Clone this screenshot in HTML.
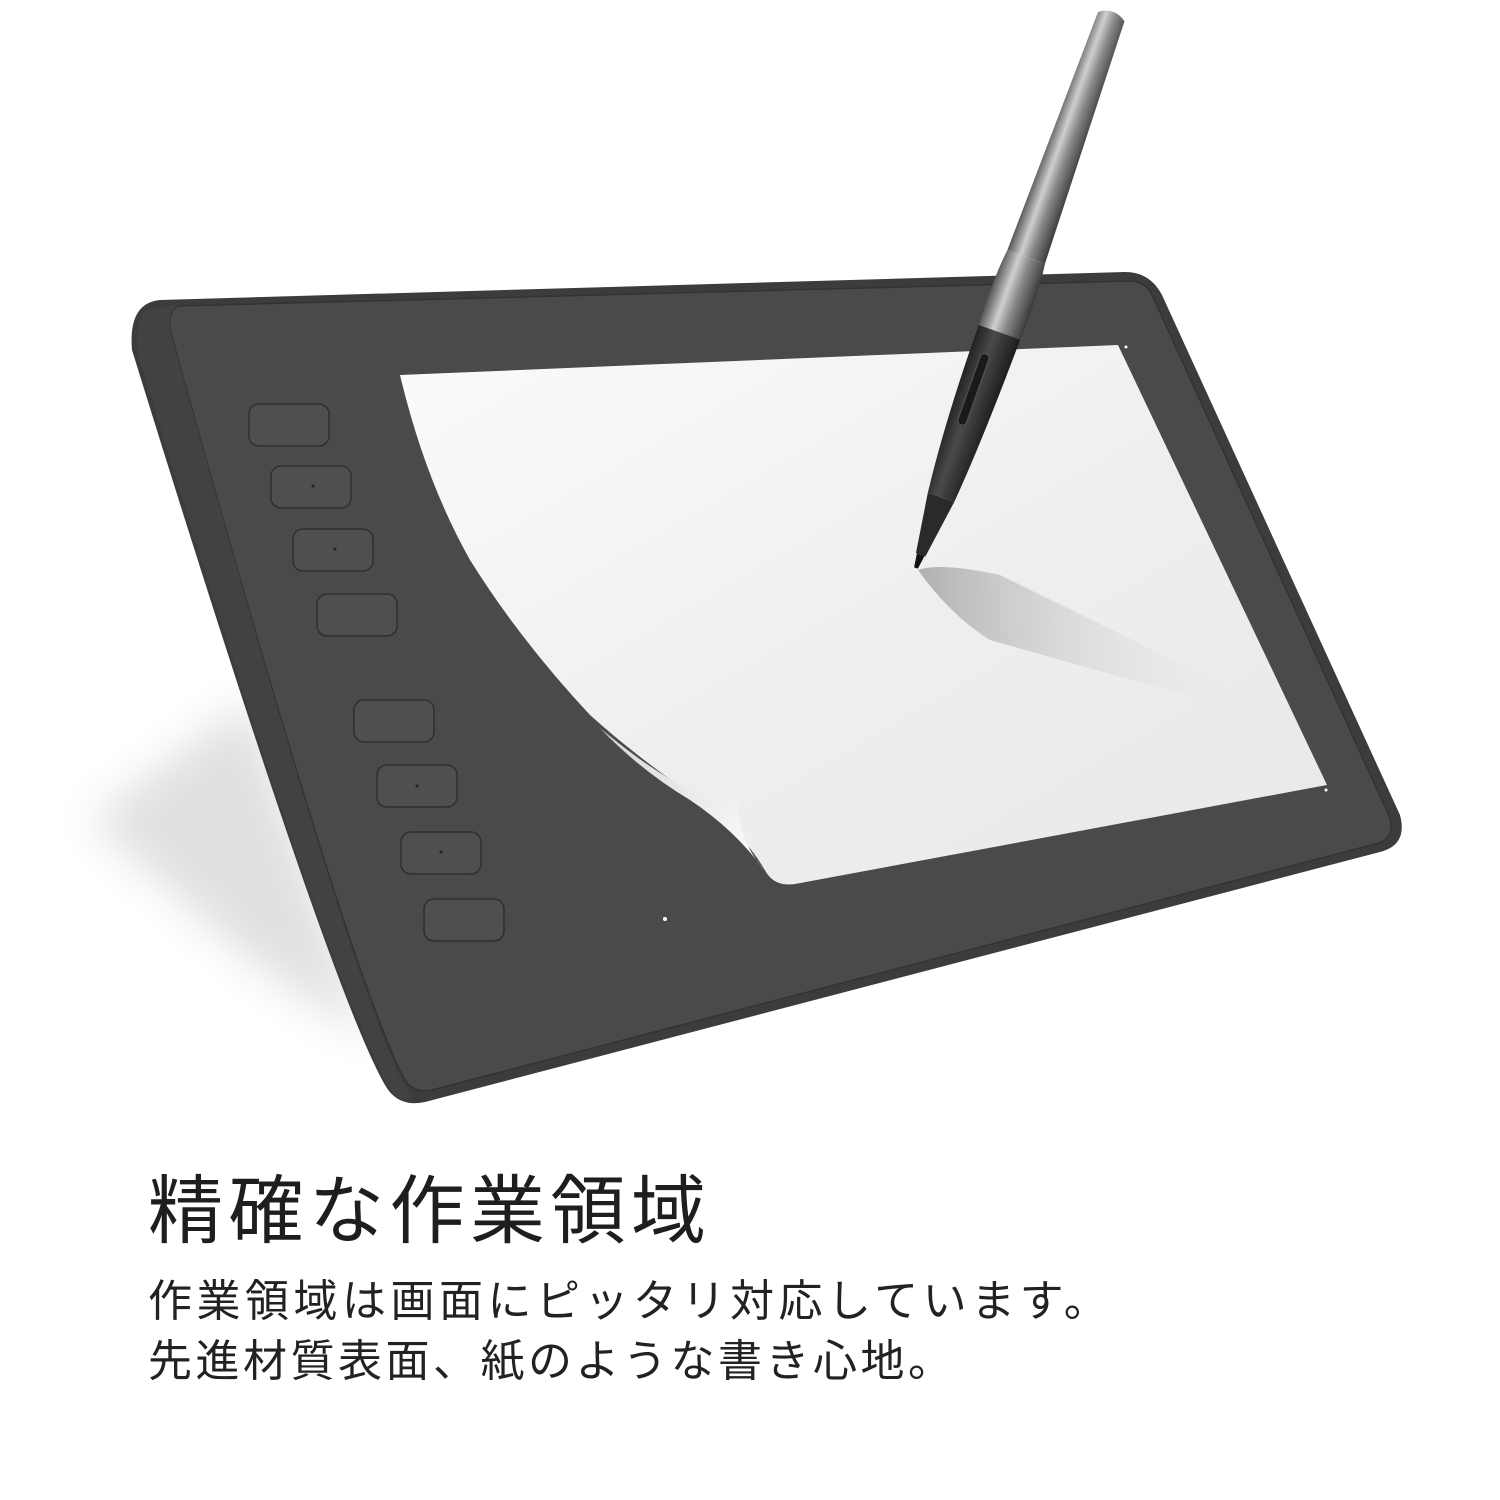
<!DOCTYPE html>
<html><head><meta charset="utf-8"><style>
html,body{margin:0;padding:0;background:#fff;width:1500px;height:1500px;overflow:hidden}
svg{position:absolute;left:0;top:0}
.t{position:absolute;left:148px;font-family:"Liberation Sans","Noto Sans CJK JP",sans-serif;color:#222;white-space:nowrap}
</style></head><body>
<svg width="1500" height="1500" viewBox="0 0 1500 1500">
<defs>
<linearGradient id="scr" x1="0" y1="0" x2="1" y2="1">
<stop offset="0" stop-color="#fbfbfb"/><stop offset="0.5" stop-color="#efefef"/><stop offset="1" stop-color="#e8e8e8"/></linearGradient>
<linearGradient id="metal" x1="0" y1="0" x2="1" y2="0">
<stop offset="0" stop-color="#555"/><stop offset="0.35" stop-color="#cfcfcf"/><stop offset="0.6" stop-color="#8a8a8a"/><stop offset="1" stop-color="#3a3a3a"/></linearGradient>
<linearGradient id="grip" x1="0" y1="0" x2="1" y2="0">
<stop offset="0" stop-color="#222"/><stop offset="0.4" stop-color="#4a4a4a"/><stop offset="1" stop-color="#1c1c1c"/></linearGradient>
<linearGradient id="shad" x1="0" y1="0" x2="1" y2="0">
<stop offset="0" stop-color="#b0b0b0"/><stop offset="1" stop-color="#e6e6e6" stop-opacity="0"/></linearGradient>
<linearGradient id="curl" x1="0" y1="0" x2="1" y2="1">
<stop offset="0" stop-color="#d6d6d6"/><stop offset="1" stop-color="#fdfdfd"/></linearGradient>
<filter id="bl"><feGaussianBlur stdDeviation="22"/></filter>
</defs>
<!-- soft shadow -->
<path d="M250 700 L370 1040 L250 960 L90 820 Z" fill="#000" opacity="0.12" filter="url(#bl)"/>
<!-- body -->
<path d="M160 300 L1125 272 Q1150 272 1162 295 L1400 815 Q1408 845 1380 852 L425 1102 Q398 1108 385 1085 Q330 990 132 350 Q128 303 160 300 Z" fill="#3c3c3c"/>
<path d="M180 306 L1130 281 Q1146 281 1153 297 L1390 818 Q1395 840 1375 844 L432 1090 Q414 1094 405 1080 Q350 980 170 330 Q168 308 180 306 Z" fill="#4a4a4a" stroke="#333" stroke-width="1.5"/>
<path d="M145 310 Q135 325 137 350 Q330 990 390 1088 Q398 1102 412 1098 L403 1083 Q350 980 170 330 Q168 310 178 305 Z" fill="#424242"/>
<!-- screen -->
<path d="M400 375 L1118 345 L1327 785 L795 884 Q775 887 766 872 Q745 835 700 800 Q640 760 590 715 Q520 640 470 560 Q425 480 400 375 Z" fill="url(#scr)"/>
<path d="M600 728 Q650 770 690 790 Q720 805 738 800 Q738 840 764 870 Q735 830 690 800 Q640 770 600 728 Z" fill="url(#curl)"/>
<!-- pen shadow -->
<path d="M918 570 Q940 562 1000 575 L1235 690 L1220 705 L990 640 Q950 615 918 570 Z" fill="url(#shad)"/>
<!-- buttons -->
<g fill="#4f4f4f" stroke="#2f2f2f" stroke-width="1.5">
<rect x="249" y="404" width="80" height="42" rx="10"/>
<rect x="271" y="466" width="80" height="42" rx="10"/>
<rect x="293" y="529" width="80" height="42" rx="10"/>
<rect x="317" y="594" width="80" height="42" rx="10"/>
<rect x="354" y="700" width="80" height="42" rx="10"/>
<rect x="377" y="765" width="80" height="42" rx="10"/>
<rect x="401" y="832" width="80" height="42" rx="10"/>
<rect x="424" y="899" width="80" height="42" rx="10"/>
</g>
<g fill="#222"><circle cx="313" cy="486" r="1.5"/><circle cx="335" cy="549" r="1.5"/><circle cx="417" cy="786" r="1.5"/><circle cx="441" cy="852" r="1.5"/></g>
<circle cx="665" cy="919" r="2" fill="#fff"/>
<circle cx="1126" cy="347" r="1.5" fill="#fff"/><circle cx="1326" cy="790" r="1.5" fill="#fff"/>
<!-- pen -->
<g transform="translate(916,568) rotate(19.5)">
<path d="M-2 0 L2 0 L4 -14 L-4 -14 Z" fill="#111"/>
<path d="M-5 -14 L5 -14 L14 -75 L-14 -75 Z" fill="#2a2a2a"/>
<path d="M-14 -75 L14 -75 Q20 -140 22 -250 L-22 -250 Q-22 -150 -14 -75 Z" fill="url(#grip)"/>
<rect x="-10" y="-225" width="9" height="75" rx="4" fill="#1a1a1a" stroke="#555"/>
<path d="M-22 -250 L22 -250 Q24 -300 20 -330 L-20 -330 Q-24 -300 -22 -250 Z" fill="url(#metal)"/>
<path d="M-20 -330 L20 -330 L14 -585 Q0 -595 -14 -585 Z" fill="url(#metal)"/>
</g>
</svg>
<div class="t" style="top:1150px;font-size:75px;letter-spacing:5.5px;color:#1e1e1e">精確な作業領域</div>
<div class="t" style="top:1265px;font-size:44px;letter-spacing:4.5px">作業領域は画面にピッタリ対応しています。</div>
<div class="t" style="top:1325px;font-size:44px;letter-spacing:3.5px">先進材質表面、紙のような書き心地。</div>
</body></html>
